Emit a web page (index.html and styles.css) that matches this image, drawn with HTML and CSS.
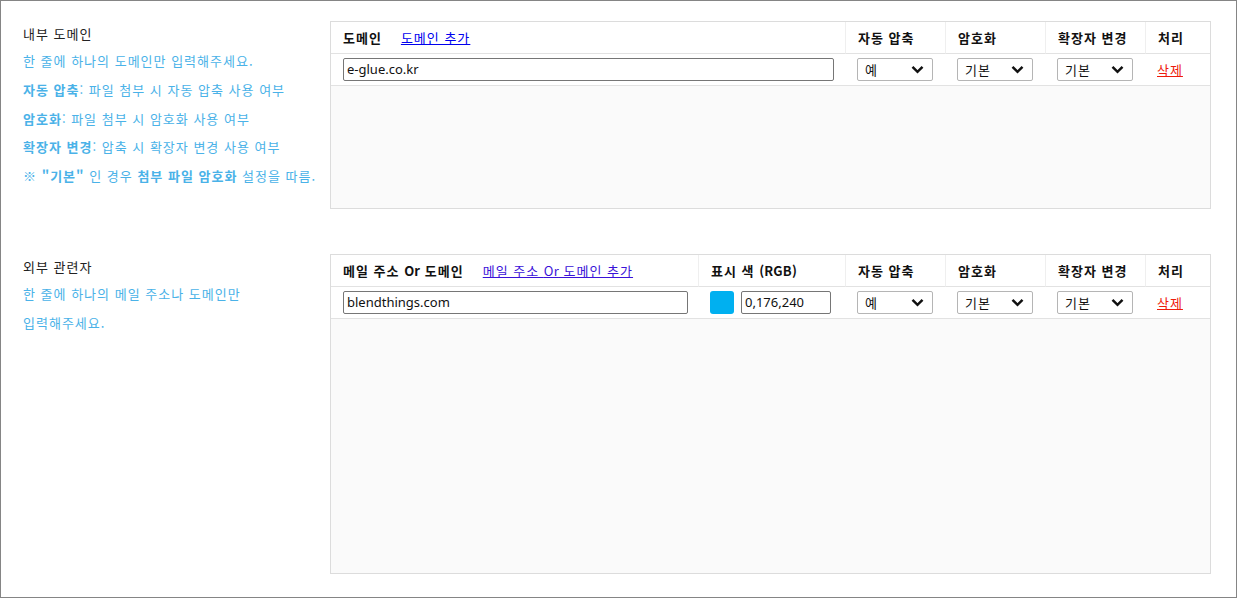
FILE: index.html
```html
<!DOCTYPE html>
<html lang="ko">
<head>
<meta charset="utf-8">
<link rel="stylesheet" href="styles.css">
</head>
<body>
<div class="page">
  <section class="sec sec-internal">
    <div class="desc">
      <div class="title">내부 도메인</div>
      <div class="line">한 줄에 하나의 도메인만 입력해주세요.</div>
      <div class="line"><b>자동 압축</b>: 파일 첨부 시 자동 압축 사용 여부</div>
      <div class="line"><b>암호화</b>: 파일 첨부 시 암호화 사용 여부</div>
      <div class="line"><b>확장자 변경</b>: 압축 시 확장자 변경 사용 여부</div>
      <div class="line">※ <b>"기본"</b> 인 경우 <b>첨부 파일 암호화</b> 설정을 따름.</div>
    </div>
    <div class="panel panel-internal">
      <table class="grid">
        <colgroup>
          <col class="c-domain"><col class="c-opt"><col class="c-opt"><col class="c-opt"><col class="c-act">
        </colgroup>
        <thead>
          <tr>
            <th><span class="hlabel">도메인</span><a href="#" class="add">도메인 추가</a></th>
            <th>자동 압축</th>
            <th>암호화</th>
            <th>확장자 변경</th>
            <th>처리</th>
          </tr>
        </thead>
        <tbody>
          <tr>
            <td><div class="input wide">e-glue.co.kr</div></td>
            <td><div class="select"><span>예</span><svg width="13" height="9" viewBox="0 0 13 9"><path d="M1.5 1.8 L6.5 6.8 L11.5 1.8" fill="none" stroke="#111" stroke-width="2.5"/></svg></div></td>
            <td><div class="select"><span>기본</span><svg width="13" height="9" viewBox="0 0 13 9"><path d="M1.5 1.8 L6.5 6.8 L11.5 1.8" fill="none" stroke="#111" stroke-width="2.5"/></svg></div></td>
            <td><div class="select"><span>기본</span><svg width="13" height="9" viewBox="0 0 13 9"><path d="M1.5 1.8 L6.5 6.8 L11.5 1.8" fill="none" stroke="#111" stroke-width="2.5"/></svg></div></td>
            <td><a href="#" class="del">삭제</a></td>
          </tr>
        </tbody>
      </table>
    </div>
  </section>

  <section class="sec sec-external">
    <div class="desc">
      <div class="title">외부 관련자</div>
      <div class="line">한 줄에 하나의 메일 주소나 도메인만</div>
      <div class="line">입력해주세요.</div>
    </div>
    <div class="panel panel-external">
      <table class="grid">
        <colgroup>
          <col class="c-mail"><col class="c-color"><col class="c-opt"><col class="c-opt"><col class="c-opt"><col class="c-act">
        </colgroup>
        <thead>
          <tr>
            <th><span class="hlabel">메일 주소 <span class="lat">Or</span> 도메인</span><a href="#" class="add add2">메일 주소 <span class="lat">Or</span> 도메인 추가</a></th>
            <th>표시 색 <span class="lat">(RGB)</span></th>
            <th>자동 압축</th>
            <th>암호화</th>
            <th>확장자 변경</th>
            <th>처리</th>
          </tr>
        </thead>
        <tbody>
          <tr>
            <td><div class="input mail">blendthings.com</div></td>
            <td><div class="colorcell"><span class="swatch"></span><div class="input rgb">0,176,240</div></div></td>
            <td><div class="select"><span>예</span><svg width="13" height="9" viewBox="0 0 13 9"><path d="M1.5 1.8 L6.5 6.8 L11.5 1.8" fill="none" stroke="#111" stroke-width="2.5"/></svg></div></td>
            <td><div class="select"><span>기본</span><svg width="13" height="9" viewBox="0 0 13 9"><path d="M1.5 1.8 L6.5 6.8 L11.5 1.8" fill="none" stroke="#111" stroke-width="2.5"/></svg></div></td>
            <td><div class="select"><span>기본</span><svg width="13" height="9" viewBox="0 0 13 9"><path d="M1.5 1.8 L6.5 6.8 L11.5 1.8" fill="none" stroke="#111" stroke-width="2.5"/></svg></div></td>
            <td><a href="#" class="del">삭제</a></td>
          </tr>
        </tbody>
      </table>
    </div>
  </section>
</div>
</body>
</html>
```

FILE: styles.css
```css
* { box-sizing: border-box; }
html, body { margin: 0; padding: 0; background: #fff; }
body {
  font-family: "Noto Sans CJK KR", "Noto Sans", sans-serif;
  font-size: 13px;
  letter-spacing: 1px;
  color: #111;
}
.page {
  width: 1237px;
  height: 598px;
  border: 1px solid #858585;
  padding: 20px 0 0 0;
  display: flex;
  flex-direction: column;
  gap: 45px;
}
.sec {
  display: grid;
  grid-template-columns: 329px 881px;
}
.desc {
  padding-left: 22px;
  color: #4ab2e8;
}
.desc .title {
  color: #222;
  line-height: 26px;
}
.desc .line {
  line-height: 28.75px;
  white-space: nowrap;
}
.desc b { font-weight: 700; }

.panel {
  border: 1px solid #dcdcdc;
  background: #fafafa;
}
.panel-internal { height: 188px; }
.panel-external { height: 320px; }

.grid {
  width: 879px;
  table-layout: fixed;
  border-collapse: separate;
  border-spacing: 0;
  background: #fff;
}
.c-domain { width: 514px; }
.c-mail { width: 367px; }
.c-color { width: 147px; }
.c-opt { width: 100px; }
.c-act { width: 65px; }

.grid th {
  height: 32px;
  padding: 0 0 0 12px;
  text-align: left;
  font-weight: 700;
  font-size: 13px;
  color: #111;
  border-bottom: 1px solid #e2e2e2;
  border-left: 1px solid #efefef;
  white-space: nowrap;
}
.grid th:first-child { border-left: none; }
.grid td {
  height: 32px;
  padding: 0 0 0 12px;
  border-bottom: 1px solid #e2e2e2;
  vertical-align: middle;
}
.lat { letter-spacing: 0.2px; }
.hlabel { margin-right: 19px; }
.add {
  font-weight: 400;
  color: #0000ee;
  text-decoration: underline;
}
.add2 { color: #3a12d8; }
.del {
  color: #ee1c0c;
  text-decoration: underline;
}

.input {
  height: 23px;
  border: 1px solid #767676;
  border-radius: 2px;
  padding: 0 3px;
  font-family: "Noto Sans", "Noto Sans CJK KR", sans-serif;
  font-size: 13px;
  letter-spacing: 0;
  line-height: 21px;
  color: #111;
  background: #fff;
}
.input.wide { width: 491px; }
.input.mail { width: 345px; }
.input.rgb { width: 90px; }

.colorcell {
  display: flex;
  align-items: center;
  gap: 7px;
}
.swatch {
  display: block;
  width: 24px;
  height: 23px;
  border-radius: 3px;
  background: #00b0f0;
}

.select {
  width: 76px;
  height: 23px;
  border: 1px solid #b5b5b5;
  border-radius: 2px;
  display: flex;
  align-items: center;
  justify-content: space-between;
  padding: 0 8px 0 7px;
  font-size: 13px;
  color: #111;
  background: #fff;
}
.select svg { display: block; }
```
